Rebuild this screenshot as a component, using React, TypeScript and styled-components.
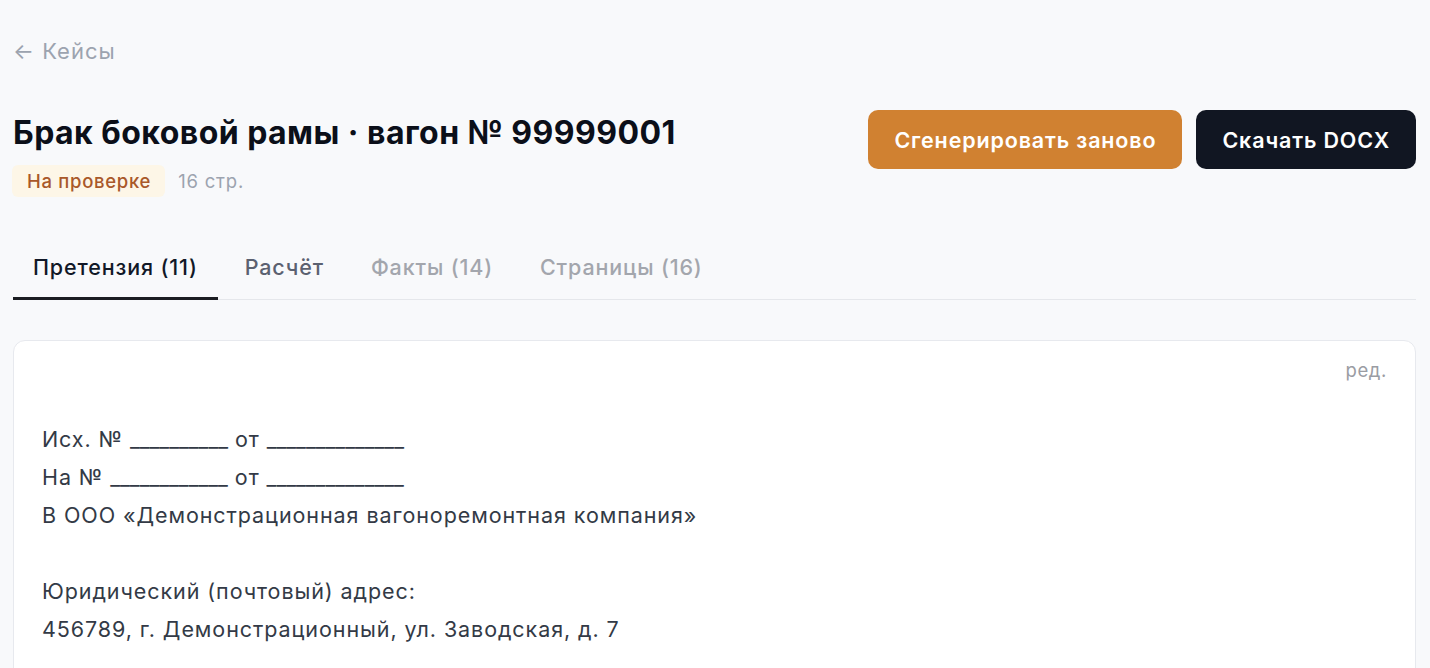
import React, { useState } from "react";
import styled, { createGlobalStyle } from "styled-components";

const GlobalStyle = createGlobalStyle`
  html, body {
    margin: 0;
    padding: 0;
    background: #f8f9fb;
    font-family: Inter, "Noto Sans", "Liberation Sans", sans-serif;
    -webkit-font-smoothing: antialiased;
  }
  * { box-sizing: border-box; }
`;

const Page = styled.div`
  padding: 35px 14px 0 13px;
  display: flex;
  flex-direction: column;
`;

const BackLink = styled.a`
  font-size: 22px;
  letter-spacing: 1px;
  color: #9ca3af;
  text-decoration: none;
  line-height: 32px;
  cursor: pointer;
`;

const Header = styled.div`
  display: flex;
  justify-content: space-between;
  align-items: flex-start;
  margin-top: 44px;
`;

const TitleBlock = styled.div`
  display: flex;
  flex-direction: column;
`;

const Title = styled.h1`
  margin: 0;
  font-size: 32px;
  font-weight: 700;
  color: #0b0f19;
  letter-spacing: 0.45px;
  line-height: 44px;
`;

const Meta = styled.div`
  display: flex;
  align-items: center;
  gap: 13px;
  margin-top: 10px;
`;

const Badge = styled.span`
  background: #fdf6e7;
  color: #a9582a;
  font-size: 18.5px;
  letter-spacing: 0.7px;
  font-weight: 500;
  padding: 4px 14px 4px 15px;
  border-radius: 6px;
  line-height: 24px;
  margin-left: -1px;
`;

const PageCount = styled.span`
  font-size: 18.5px;
  letter-spacing: 0.8px;
  color: #9ca3af;
`;

const Actions = styled.div`
  display: flex;
  gap: 14px;
  margin-top: -1px;
`;

const Button = styled.button<{ variant: "accent" | "dark" }>`
  height: 59px;
  padding: 0 26px;
  border: none;
  border-radius: 10px;
  font-family: inherit;
  font-size: 21.5px;
  letter-spacing: 0.85px;
  font-weight: 600;
  color: #ffffff;
  background: ${(p) => (p.variant === "accent" ? "#d08131" : "#111622")};
  cursor: pointer;
`;

const Tabs = styled.div`
  display: flex;
  gap: 7px;
  margin-top: 54px;
  border-bottom: 1px solid #e5e7eb;
`;

const Tab = styled.button<{ active?: boolean; muted?: boolean }>`
  background: none;
  border: none;
  font-family: inherit;
  font-size: 21.5px;
  letter-spacing: 0.85px;
  font-weight: 500;
  padding: 0 20px 14px;
  margin-bottom: -1px;
  line-height: 32px;
  color: ${(p) => (p.active ? "#111827" : p.muted ? "#a3a6ad" : "#5b6170")};
  border-bottom: 3px solid ${(p) => (p.active ? "#1b1d22" : "transparent")};
  cursor: pointer;
`;

const Card = styled.div`
  margin-top: 40px;
  background: #ffffff;
  border: 1px solid #e7e9ee;
  border-radius: 12px;
  padding: 15px 27px 40px 28px;
  min-height: 360px;
`;

const CardTop = styled.div`
  display: flex;
  justify-content: flex-end;
`;

const EditLink = styled.span`
  font-size: 18.5px;
  letter-spacing: 0.6px;
  color: #9a9ca3;
  margin-right: 1px;
  line-height: 28px;
`;

const Letter = styled.div`
  margin-top: 36px;
  font-size: 21.5px;
  letter-spacing: 0.92px;
  line-height: 38px;
  color: #333a46;
`;

const Line = styled.div`
  min-height: 38px;
`;

const Blank = styled.span`
  letter-spacing: 0;
`;

const tabs = [
  { label: "Претензия (11)", muted: false },
  { label: "Расчёт", muted: false },
  { label: "Факты (14)", muted: true },
  { label: "Страницы (16)", muted: true },
];

const blank = (n: number) => <Blank>{"_".repeat(n)}</Blank>;

const App = () => {
  const [active, setActive] = useState(0);

  return (
    <>
      <GlobalStyle />
      <Page>
        <BackLink>← Кейсы</BackLink>
        <Header>
          <TitleBlock>
            <Title>Брак боковой рамы · вагон № 99999001</Title>
            <Meta>
              <Badge>На проверке</Badge>
              <PageCount>16 стр.</PageCount>
            </Meta>
          </TitleBlock>
          <Actions>
            <Button variant="accent">Сгенерировать заново</Button>
            <Button variant="dark">Скачать DOCX</Button>
          </Actions>
        </Header>
        <Tabs>
          {tabs.map((t, i) => (
            <Tab
              key={t.label}
              active={i === active}
              muted={t.muted}
              onClick={() => setActive(i)}
            >
              {t.label}
            </Tab>
          ))}
        </Tabs>
        <Card>
          <CardTop>
            <EditLink>ред.</EditLink>
          </CardTop>
          <Letter>
            <Line>
              Исх. № {blank(10)} от {blank(14)}
            </Line>
            <Line>
              На № {blank(12)} от {blank(14)}
            </Line>
            <Line>В ООО «Демонстрационная вагоноремонтная компания»</Line>
            <Line />
            <Line>Юридический (почтовый) адрес:</Line>
            <Line>456789, г. Демонстрационный, ул. Заводская, д. 7</Line>
          </Letter>
        </Card>
      </Page>
    </>
  );
};

export default App;
